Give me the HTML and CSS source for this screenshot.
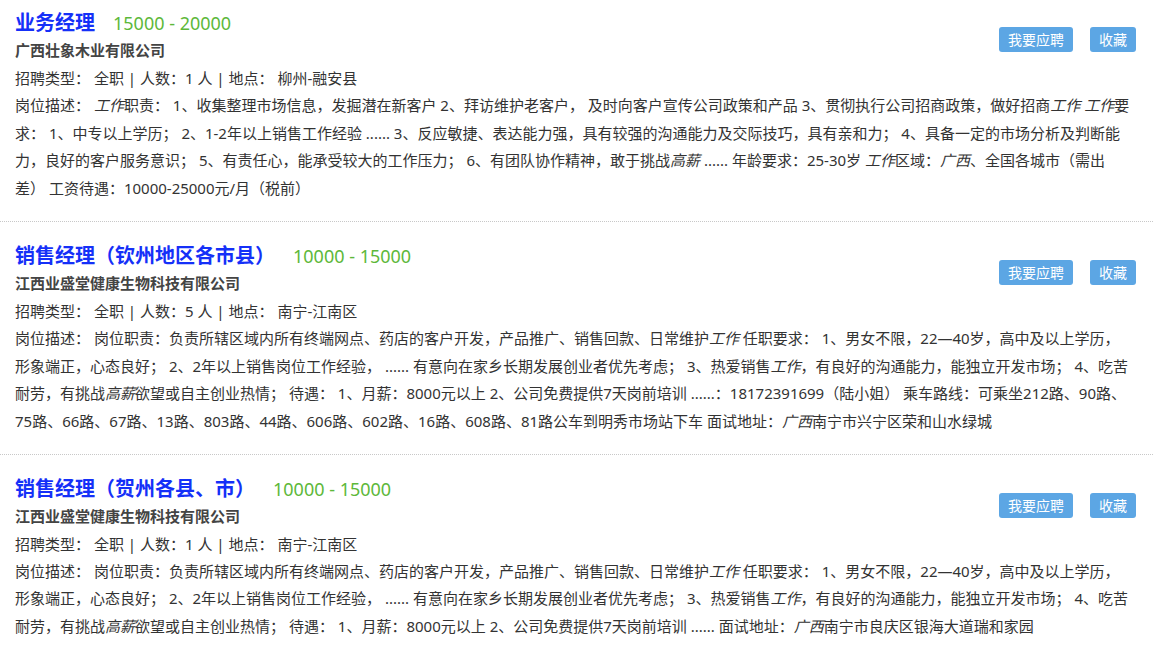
FILE: index.html
```html
<!DOCTYPE html>
<html lang="zh-CN">
<head>
<meta charset="utf-8">
<title>职位列表</title>
<link rel="stylesheet" href="styles.css">
</head>
<body>
<div class="job-list">
  <div class="job">
    <div class="job-head">
      <div class="job-main">
        <div class="title-row"><a class="title" href="#">业务经理</a><span class="salary">15000 - 20000</span></div>
        <div class="company">广西壮象木业有限公司</div>
      </div>
      <div class="actions"><a class="btn" href="#">我要应聘</a><a class="btn" href="#">收藏</a></div>
    </div>
    <div class="meta">招聘类型： 全职 | 人数：1 人 | 地点： 柳州-融安县</div>
    <div class="desc">岗位描述： <em>工作</em>职责： 1、收集整理市场信息，发掘潜在新客户 2、拜访维护老客户， 及时向客户宣传公司政策和产品 3、贯彻执行公司招商政策，做好招商<em>工作</em> <em>工作</em>要求： 1、中专以上学历； 2、1-2年以上销售工作经验 ...... 3、反应敏捷、表达能力强，具有较强的沟通能力及交际技巧，具有亲和力； 4、具备一定的市场分析及判断能力，良好的客户服务意识； 5、有责任心，能承受较大的工作压力； 6、有团队协作精神，敢于挑战<em>高薪</em> ...... 年龄要求：25-30岁 <em>工作</em>区域：<em>广西</em>、全国各城市（需出差） 工资待遇：10000-25000元/月（税前）</div>
  </div>
  <div class="job">
    <div class="job-head">
      <div class="job-main">
        <div class="title-row"><a class="title" href="#">销售经理（钦州地区各市县）</a><span class="salary">10000 - 15000</span></div>
        <div class="company">江西业盛堂健康生物科技有限公司</div>
      </div>
      <div class="actions"><a class="btn" href="#">我要应聘</a><a class="btn" href="#">收藏</a></div>
    </div>
    <div class="meta">招聘类型： 全职 | 人数：5 人 | 地点： 南宁-江南区</div>
    <div class="desc">岗位描述： 岗位职责：负责所辖区域内所有终端网点、药店的客户开发，产品推广、销售回款、日常维护<em>工作</em> 任职要求： 1、男女不限，22—40岁，高中及以上学历，形象端正，心态良好； 2、2年以上销售岗位工作经验， ...... 有意向在家乡长期发展创业者优先考虑； 3、热爱销售<em>工作</em>，有良好的沟通能力，能独立开发市场； 4、吃苦耐劳，有挑战<em>高薪</em>欲望或自主创业热情； 待遇： 1、月薪：8000元以上 2、公司免费提供7天岗前培训 ......：18172391699（陆小姐） 乘车路线：可乘坐212路、90路、75路、66路、67路、13路、803路、44路、606路、602路、16路、608路、81路公车到明秀市场站下车 面试地址：<em>广西</em>南宁市兴宁区荣和山水绿城</div>
  </div>
  <div class="job">
    <div class="job-head">
      <div class="job-main">
        <div class="title-row"><a class="title" href="#">销售经理（贺州各县、市）</a><span class="salary">10000 - 15000</span></div>
        <div class="company">江西业盛堂健康生物科技有限公司</div>
      </div>
      <div class="actions"><a class="btn" href="#">我要应聘</a><a class="btn" href="#">收藏</a></div>
    </div>
    <div class="meta">招聘类型： 全职 | 人数：1 人 | 地点： 南宁-江南区</div>
    <div class="desc">岗位描述： 岗位职责：负责所辖区域内所有终端网点、药店的客户开发，产品推广、销售回款、日常维护<em>工作</em> 任职要求： 1、男女不限，22—40岁，高中及以上学历，形象端正，心态良好； 2、2年以上销售岗位工作经验， ...... 有意向在家乡长期发展创业者优先考虑； 3、热爱销售<em>工作</em>，有良好的沟通能力，能独立开发市场； 4、吃苦耐劳，有挑战<em>高薪</em>欲望或自主创业热情； 待遇： 1、月薪：8000元以上 2、公司免费提供7天岗前培训 ...... 面试地址：<em>广西</em>南宁市良庆区银海大道瑞和家园</div>
  </div>
</div>
</body>
</html>
```

FILE: styles.css
```css
* { box-sizing: border-box; }
html, body {
  margin: 0;
  padding: 0;
  background: #fff;
}
body {
  font-family: "Noto Sans", "Noto Sans CJK SC", sans-serif;
  font-size: 15px;
  color: #333;
}
.job-list {
  width: 1153px;
}
.job {
  padding: 19px 17px 18px 15px;
  border-bottom: 1px dotted #c8c8c8;
}
.job:first-child {
  padding-top: 8px;
}
.job-head {
  display: flex;
  justify-content: space-between;
  align-items: flex-start;
}
.title-row {
  height: 28px;
  line-height: 28px;
  display: flex;
  align-items: baseline;
  white-space: nowrap;
}
.title {
  font-family: "Noto Sans CJK SC", sans-serif;
  font-size: 20px;
  font-weight: bold;
  color: #1530f8;
  text-decoration: none;
}
.salary {
  margin-left: 18px;
  font-family: "Noto Sans", "Noto Sans CJK SC", sans-serif;
  font-size: 18px;
  color: #5db83a;
}
.company {
  line-height: 28px;
  font-weight: bold;
  color: #444;
}
.actions {
  display: flex;
  gap: 17px;
  margin-top: 19px;
}
.btn {
  display: block;
  height: 25px;
  line-height: 25px;
  padding: 0 9px;
  background: #5ca6e4;
  color: #fff;
  border-radius: 3px;
  text-decoration: none;
  font-size: 14px;
}
.meta {
  line-height: 28px;
}
.desc {
  margin-right: 5px;
  line-height: 27.7px;
}
.desc em {
  font-style: italic;
}
```
